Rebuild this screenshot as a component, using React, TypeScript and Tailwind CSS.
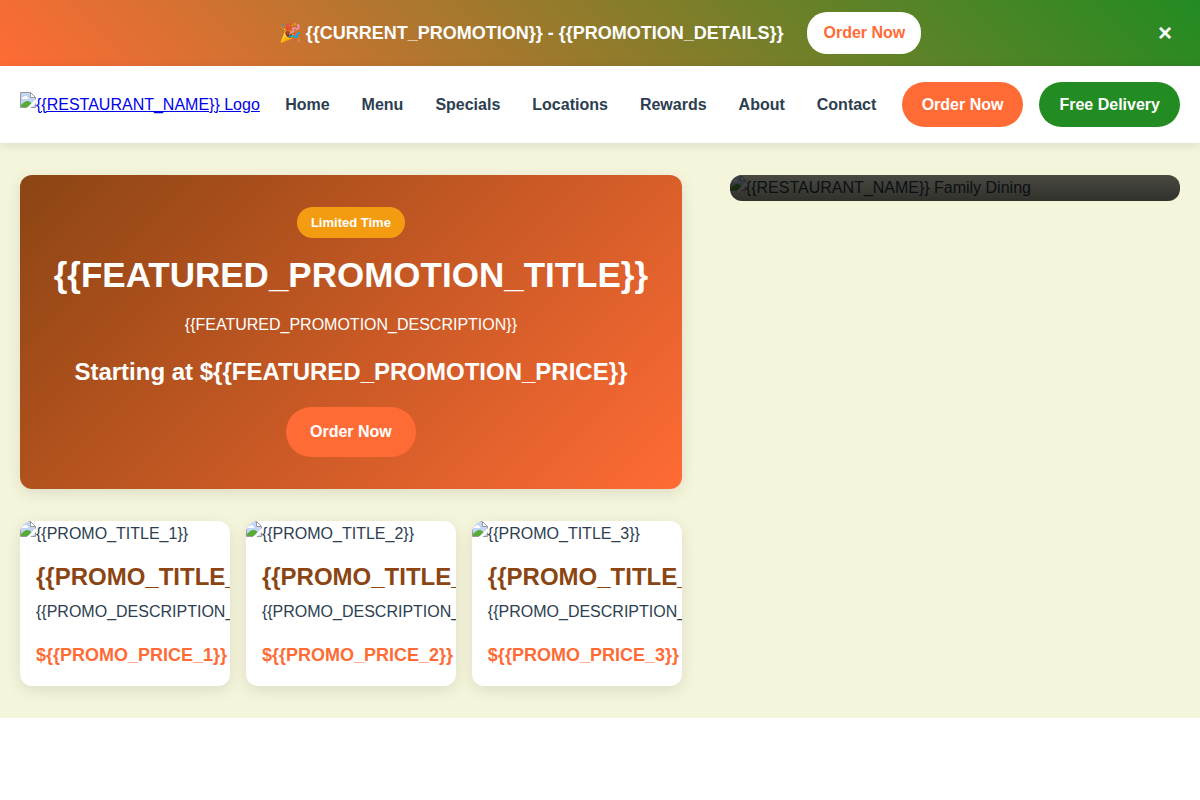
import { useState } from "react";

const navItems = ["Home", "Menu", "Specials", "Locations", "Rewards", "About", "Contact"];
const promoNumbers = [1, 2, 3];

function ImageIcon() {
  return (
    <svg className="block h-4 w-4 shrink-0" viewBox="0 0 16 16" aria-hidden="true">
      <path d="M0.5 0.5H11L15.5 5V8L8 15.5H0.5Z" fill="#c3d5f7" />
      <path d="M2 6.5C2 5.2 3.5 4.8 4 5.3C4.5 3.4 7.2 3.8 7.1 5.3C8.3 5.2 8.6 6.6 8 7H2.6Z" fill="#fff" />
      <path d="M1 15V13C3 11 5 9 7.5 9C9.3 9 10.8 10.2 11.5 11.5L8 15Z" fill="#58ab38" />
      <path d="M16 7L7 16H10.5L16 10.5Z" fill="#fff" />
      <path d="M11.5 15.5L15.5 11.5V15.5Z" fill="#c3d5f7" />
      <path d="M10.5 0.5V5.5H15.5Z" fill="#fff" />
      <path d="M0.5 15.5V0.5H10.5L15.5 5.5V7.5M0.5 15.5H7M10.5 0.5V5.5H15.5M15.5 11.5V15.5H11" fill="none" stroke="#999" />
    </svg>
  );
}

function Picture({ label }: { label: string }) {
  return (
    <div role="img" aria-label={label} className="flex h-[26px] items-start">
      <ImageIcon />
      <span className="whitespace-nowrap">{label}</span>
    </div>
  );
}

export default function App() {
  const [bannerOpen, setBannerOpen] = useState(true);

  return (
    <div className="bg-white font-['Liberation_Sans',Arial,sans-serif] text-base leading-[26px] text-[#2c3e50]">
      {bannerOpen && (
        <div className="flex items-center bg-[linear-gradient(45deg,#ff6b35,#228b22)] px-5 py-3 text-white">
          <div className="flex flex-1 items-center justify-center gap-6 pl-[30px]">
            <span className="text-lg leading-7 font-bold">
              🎉 {"{{CURRENT_PROMOTION}} - {{PROMOTION_DETAILS}}"}
            </span>
            <a href="#order" className="rounded-[20px] bg-white px-4 py-2 font-bold text-[#ff6b35]">
              Order Now
            </a>
          </div>
          <button
            type="button"
            aria-label="Close"
            onClick={() => setBannerOpen(false)}
            className="w-[30px] text-2xl leading-8 font-bold"
          >
            ×
          </button>
        </div>
      )}

      <header className="sticky top-0 z-10 bg-white shadow-[0_2px_10px_rgba(0,0,0,0.1)]">
        <div className="flex items-center justify-between px-5 py-4">
          <a href="#home" className="flex items-start text-[#0000ee] underline">
            <ImageIcon />
            <span className="whitespace-nowrap">{"{{RESTAURANT_NAME}} Logo"}</span>
          </a>
          <nav className="flex gap-8 font-bold">
            {navItems.map((item) => (
              <a key={item} href={`#${item.toLowerCase()}`}>
                {item}
              </a>
            ))}
          </nav>
          <div className="flex gap-4 font-bold text-white">
            <a href="#order" className="rounded-[25px] bg-[#ff6b35] px-5 py-[10px] leading-[25px]">
              Order Now
            </a>
            <a href="#delivery" className="rounded-[25px] bg-[#228b22] px-5 py-[10px] leading-[25px]">
              Free Delivery
            </a>
          </div>
        </div>
      </header>

      <main className="bg-[#f5f5dc] px-5 py-8">
        <div className="grid grid-cols-[1.47fr_1fr] items-start gap-12">
          <div className="flex flex-col gap-8">
            <section className="flex flex-col items-center gap-4 rounded-xl bg-[linear-gradient(135deg,#8b4513,#ff6b35)] p-8 text-center text-white shadow-[0_4px_15px_rgba(0,0,0,0.1)]">
              <span className="rounded-2xl bg-[#f39c12] px-[14px] py-[5px] text-[13px] leading-[21px] font-bold">
                Limited Time
              </span>
              <h1 className="text-[35px] leading-[42px] font-bold">{"{{FEATURED_PROMOTION_TITLE}}"}</h1>
              <p className="leading-[25px]">{"{{FEATURED_PROMOTION_DESCRIPTION}}"}</p>
              <p className="text-2xl leading-[38px] font-bold">{"Starting at ${{FEATURED_PROMOTION_PRICE}}"}</p>
              <a href="#order" className="rounded-[25px] bg-[#ff6b35] px-6 py-3 leading-[26px] font-bold">
                Order Now
              </a>
            </section>

            <section className="grid grid-cols-3 gap-4">
              {promoNumbers.map((n) => (
                <article
                  key={n}
                  className="overflow-hidden rounded-xl bg-white shadow-[0_4px_15px_rgba(0,0,0,0.1)]"
                >
                  <Picture label={`{{PROMO_TITLE_${n}}}`} />
                  <div className="p-4 whitespace-nowrap">
                    <h3 className="mb-2 text-2xl leading-7 font-bold text-[#8b4513]">{`{{PROMO_TITLE_${n}}}`}</h3>
                    <p className="mb-4 leading-[26px]">{`{{PROMO_DESCRIPTION_${n}}}`}</p>
                    <p className="text-lg leading-[29px] font-bold text-[#ff6b35]">{`\${{PROMO_PRICE_${n}}}`}</p>
                  </div>
                </article>
              ))}
            </section>
          </div>

          <div className="relative overflow-hidden rounded-xl">
            <Picture label="{{RESTAURANT_NAME}} Family Dining" />
            <div className="absolute inset-0 bg-linear-to-b from-black/70 to-black/80" />
          </div>
        </div>
      </main>
    </div>
  );
}
